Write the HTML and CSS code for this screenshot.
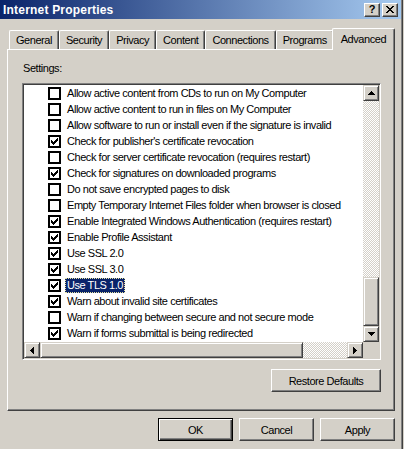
FILE: index.html
```html
<!DOCTYPE html>
<html>

<head>
    <title>Internet Properties</title>
    <link rel="stylesheet" href="styles.css">
</head>

<body>
    <div class="window">
        <div class="titlebar">
            <span class="title">Internet Properties</span>
            <div class="title-btns">
                <span class="tbtn help">?</span>
                <span class="tbtn close">
                    <svg width="8" height="7" viewBox="0 0 8 7"><path d="M0 0h2v1h1v1h2v-1h1v-1h2v1h-1v1h-1v1h-1v1h1v1h1v1h1v1h-2v-1h-1v-1h-2v1h-1v1h-2v-1h1v-1h1v-1h1v-1h-1v-1h-1v-1h-1z" fill="#000"/></svg>
                </span>
            </div>
        </div>

        <div class="client">
            <div class="tabs">
                <span class="tab">General</span>
                <span class="tab">Security</span>
                <span class="tab">Privacy</span>
                <span class="tab">Content</span>
                <span class="tab">Connections</span>
                <span class="tab">Programs</span>
                <span class="tab active">Advanced</span>
            </div>

            <div class="panel">
                <div class="label">Settings:</div>

                <div class="listbox">
                    <div class="rows">
                        <div class="row"><span class="check"></span><span class="text">Allow active content from CDs to run on My Computer</span></div>
                        <div class="row"><span class="check"></span><span class="text">Allow active content to run in files on My Computer</span></div>
                        <div class="row"><span class="check"></span><span class="text">Allow software to run or install even if the signature is invalid</span></div>
                        <div class="row"><span class="check"><svg width="9" height="9" viewBox="0 0 9 9"><path d="M1 3h1v1h1v1h1v-1h1v-1h1v-1h1v-1h1v3h-1v1h-1v1h-1v1h-1v1h-1v-1h-1v-1h-1z"/></svg></span><span class="text">Check for publisher's certificate revocation</span></div>
                        <div class="row"><span class="check"></span><span class="text">Check for server certificate revocation (requires restart)</span></div>
                        <div class="row"><span class="check"><svg width="9" height="9" viewBox="0 0 9 9"><path d="M1 3h1v1h1v1h1v-1h1v-1h1v-1h1v-1h1v3h-1v1h-1v1h-1v1h-1v1h-1v-1h-1v-1h-1z"/></svg></span><span class="text">Check for signatures on downloaded programs</span></div>
                        <div class="row"><span class="check"></span><span class="text">Do not save encrypted pages to disk</span></div>
                        <div class="row"><span class="check"></span><span class="text">Empty Temporary Internet Files folder when browser is closed</span></div>
                        <div class="row"><span class="check"><svg width="9" height="9" viewBox="0 0 9 9"><path d="M1 3h1v1h1v1h1v-1h1v-1h1v-1h1v-1h1v3h-1v1h-1v1h-1v1h-1v1h-1v-1h-1v-1h-1z"/></svg></span><span class="text">Enable Integrated Windows Authentication (requires restart)</span></div>
                        <div class="row"><span class="check"><svg width="9" height="9" viewBox="0 0 9 9"><path d="M1 3h1v1h1v1h1v-1h1v-1h1v-1h1v-1h1v3h-1v1h-1v1h-1v1h-1v1h-1v-1h-1v-1h-1z"/></svg></span><span class="text">Enable Profile Assistant</span></div>
                        <div class="row"><span class="check"><svg width="9" height="9" viewBox="0 0 9 9"><path d="M1 3h1v1h1v1h1v-1h1v-1h1v-1h1v-1h1v3h-1v1h-1v1h-1v1h-1v1h-1v-1h-1v-1h-1z"/></svg></span><span class="text">Use SSL 2.0</span></div>
                        <div class="row"><span class="check"><svg width="9" height="9" viewBox="0 0 9 9"><path d="M1 3h1v1h1v1h1v-1h1v-1h1v-1h1v-1h1v3h-1v1h-1v1h-1v1h-1v1h-1v-1h-1v-1h-1z"/></svg></span><span class="text">Use SSL 3.0</span></div>
                        <div class="row"><span class="check"><svg width="9" height="9" viewBox="0 0 9 9"><path d="M1 3h1v1h1v1h1v-1h1v-1h1v-1h1v-1h1v3h-1v1h-1v1h-1v1h-1v1h-1v-1h-1v-1h-1z"/></svg></span><span class="text selected">Use TLS 1.0</span></div>
                        <div class="row"><span class="check"><svg width="9" height="9" viewBox="0 0 9 9"><path d="M1 3h1v1h1v1h1v-1h1v-1h1v-1h1v-1h1v3h-1v1h-1v1h-1v1h-1v1h-1v-1h-1v-1h-1z"/></svg></span><span class="text">Warn about invalid site certificates</span></div>
                        <div class="row"><span class="check"></span><span class="text">Warn if changing between secure and not secure mode</span></div>
                        <div class="row"><span class="check"><svg width="9" height="9" viewBox="0 0 9 9"><path d="M1 3h1v1h1v1h1v-1h1v-1h1v-1h1v-1h1v3h-1v1h-1v1h-1v1h-1v1h-1v-1h-1v-1h-1z"/></svg></span><span class="text">Warn if forms submittal is being redirected</span></div>
                    </div>

                    <div class="vscroll">
                        <span class="sbtn"><svg width="7" height="4" viewBox="0 0 7 4"><path d="M3 0h1v1h1v1h1v1h1v1H0V3h1V2h1V1h1z"/></svg></span>
                        <div class="track"><span class="thumb"></span></div>
                        <span class="sbtn"><svg width="7" height="4" viewBox="0 0 7 4"><path d="M0 0h7v1h-1v1h-1v1h-1v1h-1v-1h-1v-1h-1v-1h-1z"/></svg></span>
                    </div>

                    <div class="hscroll">
                        <span class="sbtn"><svg width="4" height="7" viewBox="0 0 4 7"><path d="M3 0h1v7h-1v-1h-1v-1h-1v-1h-1v-1h1v-1h1v-1h1z"/></svg></span>
                        <div class="track"><span class="thumb"></span></div>
                        <span class="sbtn"><svg width="4" height="7" viewBox="0 0 4 7"><path d="M0 0h1v1h1v1h1v1h1v1h-1v1h-1v1h-1v1h-1z"/></svg></span>
                    </div>

                    <div class="corner"></div>
                </div>

                <div class="panel-actions">
                    <button class="btn wide">Restore Defaults</button>
                </div>
            </div>

            <div class="actions">
                <button class="btn default">OK</button>
                <button class="btn">Cancel</button>
                <button class="btn">Apply</button>
            </div>
        </div>
    </div>
</body>

</html>
```

FILE: styles.css
```css
body {
    margin: 0;
    padding: 0;
    background-color: #d4d0c8;
    font-family: "Liberation Sans", Arial, sans-serif;
    font-size: 11px;
    letter-spacing: -0.45px;
    color: #000;
}

.window {
    width: 403px;
    height: 449px;
    box-sizing: border-box;
    padding-right: 1px;
    border-right: 1px solid #404040;
    box-shadow: inset -1px 0 #808080;
    background-color: #d4d0c8;
    overflow: hidden;
}

/* title bar */

.titlebar {
    height: 19px;
    display: flex;
    align-items: center;
    justify-content: space-between;
    padding: 0 3px 0 3px;
    background: linear-gradient(to right, #0a246a, #a6caf0);
}

.title {
    color: #fff;
    font-weight: bold;
    font-size: 12px;
    letter-spacing: 0.2px;
}

.title-btns {
    display: flex;
    gap: 2px;
}

.tbtn {
    width: 16px;
    height: 14px;
    box-sizing: border-box;
    display: flex;
    align-items: center;
    justify-content: center;
    background-color: #d4d0c8;
    border: 1px solid;
    border-color: #fff #404040 #404040 #fff;
    box-shadow: inset -1px -1px #808080;
    font-weight: bold;
    font-size: 11px;
    letter-spacing: 0;
    line-height: 1;
}

/* tabs */

.client {
    padding: 9px 6px 0 7px;
}

.tabs {
    height: 21px;
    display: flex;
    align-items: flex-end;
    padding-left: 2px;
}

.tab {
    height: 19px;
    box-sizing: border-box;
    display: flex;
    align-items: center;
    padding: 0 6px;
    border: 1px solid #fff;
    border-right-color: #404040;
    border-bottom: none;
    border-radius: 2px 2px 0 0;
    box-shadow: inset -1px 0 #808080;
    white-space: nowrap;
}

.tab.active {
    position: relative;
    z-index: 1;
    height: 22px;
    margin: 0 -2px -1px -2px;
    padding: 0 8px 2px 8px;
    background-color: #d4d0c8;
}

/* page */

.panel {
    height: 362px;
    box-sizing: border-box;
    display: flex;
    flex-direction: column;
    padding: 12px 13px 0 14px;
    border: 1px solid;
    border-color: #fff #404040 #404040 #fff;
    box-shadow: inset -1px -1px #808080;
}

.label {
    line-height: 13px;
    padding-left: 1px;
}

.listbox {
    margin-top: 8px;
    height: 277px;
    box-sizing: border-box;
    display: grid;
    grid-template-columns: 1fr 16px;
    grid-template-rows: 1fr 16px;
    padding: 1px;
    border: 1px solid;
    border-color: #808080 #fff #fff #808080;
    box-shadow: inset 1px 1px #404040, inset -1px -1px #d4d0c8;
    background-color: #fff;
}

.rows {
    overflow: hidden;
    background-color: #fff;
}

.row {
    height: 16px;
    display: flex;
    align-items: center;
    padding-left: 24px;
    white-space: nowrap;
}

.check {
    width: 13px;
    height: 13px;
    flex: none;
    box-sizing: border-box;
    border: 2px solid #000;
    background-color: #fff;
    display: flex;
    align-items: center;
    justify-content: center;
}

.check svg {
    display: block;
    shape-rendering: crispEdges;
}

.text {
    margin-left: 4px;
    padding: 0 2px;
    line-height: 15px;
}

.text.selected {
    background-color: #0a246a;
    color: #fff;
    outline: 1px dotted #e8e4a0;
    outline-offset: -1px;
}

/* scroll bars */

.vscroll,
.hscroll {
    display: flex;
}

.vscroll {
    flex-direction: column;
}

.sbtn {
    width: 16px;
    height: 16px;
    flex: none;
    box-sizing: border-box;
    display: flex;
    align-items: center;
    justify-content: center;
    background-color: #d4d0c8;
    border: 1px solid;
    border-color: #d4d0c8 #404040 #404040 #d4d0c8;
    box-shadow: inset 1px 1px #fff, inset -1px -1px #808080;
}

.sbtn svg {
    display: block;
    shape-rendering: crispEdges;
}

.track {
    flex: 1;
    display: flex;
    background: repeating-conic-gradient(#d4d0c8 0 25%, #fff 0 50%) 0 0 / 2px 2px;
}

.vscroll .track {
    flex-direction: column;
}

.thumb {
    box-sizing: border-box;
    background-color: #d4d0c8;
    border: 1px solid;
    border-color: #d4d0c8 #404040 #404040 #d4d0c8;
    box-shadow: inset 1px 1px #fff, inset -1px -1px #808080;
}

.vscroll .thumb {
    height: 49px;
    margin-top: auto;
}

.hscroll .thumb {
    width: 263px;
}

.corner {
    background-color: #d4d0c8;
}

/* buttons */

.btn {
    width: 75px;
    height: 23px;
    box-sizing: border-box;
    padding: 0;
    font-family: inherit;
    font-size: 11px;
    letter-spacing: inherit;
    color: #000;
    background-color: #d4d0c8;
    border: 1px solid;
    border-color: #fff #404040 #404040 #fff;
    box-shadow: inset -1px -1px #808080;
    border-radius: 0;
}

.btn.wide {
    width: 110px;
}

.btn.default {
    border-color: #000;
    box-shadow: inset 1px 1px #fff, inset -1px -1px #404040, inset -2px -2px #808080;
}

.panel-actions {
    display: flex;
    justify-content: flex-end;
    margin-top: 9px;
}

.actions {
    display: flex;
    justify-content: flex-end;
    gap: 6px;
    margin-top: 7px;
}
```
